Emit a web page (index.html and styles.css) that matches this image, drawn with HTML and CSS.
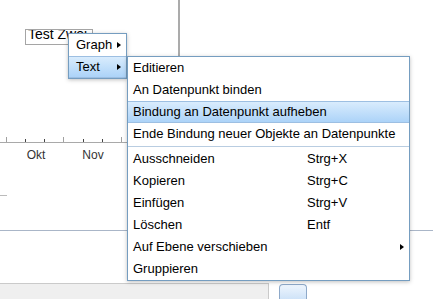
FILE: index.html
```html
<!DOCTYPE html>
<html>
<head>
	<title>Diagramm Editor</title>
	<link rel="stylesheet" href="styles.css">
</head>
<body>
	<div class="canvas">
		<svg class="chart" width="433" height="283" viewBox="0 0 433 283">
			<line x1="179" y1="0" x2="179" y2="60" stroke="#ababab" stroke-width="2" />
			<line x1="0" y1="142.5" x2="130" y2="142.5" stroke="#a9a9a9" />
			<g stroke="#a0a0a0">
				<line x1="6.5" y1="137" x2="6.5" y2="142" />
				<line x1="63.5" y1="137" x2="63.5" y2="142" />
				<line x1="121.5" y1="137" x2="121.5" y2="142" />
			</g>
			<g stroke="#444">
				<line x1="25.5" y1="139" x2="25.5" y2="142" />
				<line x1="44.5" y1="139" x2="44.5" y2="142" />
				<line x1="83.5" y1="139" x2="83.5" y2="142" />
				<line x1="102.5" y1="139" x2="102.5" y2="142" />
			</g>
			<text class="axis-label" x="36" y="159" text-anchor="middle">Okt</text>
			<text class="axis-label" x="93" y="159" text-anchor="middle">Nov</text>
			<line x1="0" y1="195.5" x2="7" y2="195.5" stroke="#bbbbbb" />
			<line x1="0" y1="230.5" x2="433" y2="230.5" stroke="#aab6c8" />
		</svg>

		<div class="textbox">Test Zwei</div>

		<div class="menu menu-small">
			<div class="menu-item">Graph<span class="arrow"></span></div>
			<div class="menu-item hover">Text<span class="arrow"></span></div>
		</div>

		<div class="menu menu-main">
			<div class="menu-item">Editieren</div>
			<div class="menu-item">An Datenpunkt binden</div>
			<div class="menu-item hover">Bindung an Datenpunkt aufheben</div>
			<div class="menu-item">Ende Bindung neuer Objekte an Datenpunkte</div>
			<div class="menu-sep"></div>
			<div class="menu-item">Ausschneiden<span class="accel">Strg+X</span></div>
			<div class="menu-item">Kopieren<span class="accel">Strg+C</span></div>
			<div class="menu-item">Einfügen<span class="accel">Strg+V</span></div>
			<div class="menu-item">Löschen<span class="accel">Entf</span></div>
			<div class="menu-item">Auf Ebene verschieben<span class="arrow"></span></div>
			<div class="menu-item">Gruppieren</div>
		</div>
	</div>

	<div class="footer">
		<div class="tabbar"></div>
		<div class="tab-button"></div>
	</div>
</body>
</html>
```

FILE: styles.css
```css
body {
	margin: 0;
	width: 433px;
	height: 299px;
	overflow: hidden;
	background-color: white;
	font-family: "Liberation Sans", Arial, sans-serif;
	font-size: 13px;
	color: #000;
}

.canvas {
	position: relative;
	height: 283px;
}

.chart {
	display: block;
}

.axis-label {
	font-family: "Liberation Sans", Arial, sans-serif;
	font-size: 12px;
	fill: #333;
}

.textbox {
	position: absolute;
	left: 25px;
	top: 29px;
	width: 64px;
	height: 14px;
	border: 1px solid #a5a5a5;
	background-color: white;
	overflow: hidden;
	font-size: 14px;
	line-height: 8px;
	padding-left: 2px;
	white-space: nowrap;
}

.menu {
	position: absolute;
	background-color: white;
	border: 1px solid #759dc0;
	box-shadow: 0 1px 4px rgba(0, 0, 0, 0.25);
}

.menu-small {
	left: 68px;
	top: 33px;
	width: 57px;
}

.menu-small .menu-item {
	padding-left: 7px;
}

.menu-small .arrow {
	left: 48px;
}

.menu-main {
	left: 127px;
	top: 56px;
	width: 281px;
}

.menu-item {
	position: relative;
	height: 22px;
	line-height: 22px;
	padding-left: 5px;
	box-sizing: border-box;
	white-space: nowrap;
}

.menu-item.hover {
	background: linear-gradient(#d9ecfd, #acd3f8);
	border-top: 1px solid #9dbfe2;
	border-bottom: 1px solid #9dbfe2;
	line-height: 20px;
}

.accel {
	position: absolute;
	left: 179px;
}

.arrow {
	position: absolute;
	left: 272px;
	top: 8px;
	width: 0;
	height: 0;
	border-top: 3.5px solid transparent;
	border-bottom: 3.5px solid transparent;
	border-left: 4px solid #000;
}

.menu-item.hover .arrow {
	top: 7px;
}

.menu-sep {
	height: 1px;
	margin: 1px 0;
	background-color: #b9cde1;
}

.footer {
	display: flex;
	height: 16px;
}

.tabbar {
	width: 268px;
	background-color: #efefef;
	border-top: 1px solid #cacaca;
	border-right: 1px solid #cacaca;
}

.tab-button {
	width: 26px;
	margin-left: 10px;
	margin-top: 1px;
	border: 1px solid #8ea9c9;
	border-bottom: none;
	border-radius: 4px 4px 0 0;
	background: linear-gradient(#eef5fd, #cfe3f8);
}
```
